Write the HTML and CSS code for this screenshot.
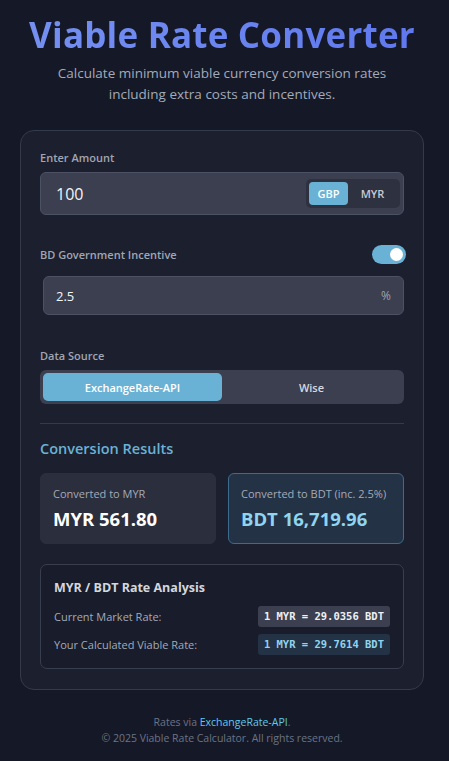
FILE: index.html
```html
<!DOCTYPE html>
<html lang="en">
<head>
<meta charset="utf-8">
<title>Viable Rate Converter</title>
<link rel="stylesheet" href="styles.css">
</head>
<body>
<div class="page">
  <header class="header">
    <h1 class="title">Viable Rate Converter</h1>
    <p class="subtitle">Calculate minimum viable currency conversion rates including extra costs and incentives.</p>
  </header>

  <main class="card">
    <section class="field">
      <label class="label">Enter Amount</label>
      <div class="amount-input">
        <span class="amount-value">100</span>
        <div class="currency-toggle">
          <span class="cur cur-active">GBP</span>
          <span class="cur">MYR</span>
        </div>
      </div>
    </section>

    <section class="field field-incentive">
      <div class="label-row">
        <label class="label">BD Government Incentive</label>
        <span class="switch"><span class="knob"></span></span>
      </div>
      <div class="pct-input">
        <span class="pct-value">2.5</span>
        <span class="pct-sign">%</span>
      </div>
    </section>

    <section class="field field-source">
      <label class="label">Data Source</label>
      <div class="segmented">
        <span class="seg seg-active">ExchangeRate-API</span>
        <span class="seg">Wise</span>
      </div>
    </section>

    <hr class="divider">

    <h2 class="results-title">Conversion Results</h2>
    <div class="results">
      <div class="result">
        <div class="result-label">Converted to MYR</div>
        <div class="result-value">MYR 561.80</div>
      </div>
      <div class="result result-hi">
        <div class="result-label">Converted to BDT (inc. 2.5%)</div>
        <div class="result-value">BDT 16,719.96</div>
      </div>
    </div>

    <div class="analysis">
      <h3 class="analysis-title">MYR / BDT Rate Analysis</h3>
      <div class="row">
        <span class="row-label">Current Market Rate:</span>
        <span class="badge">1 MYR = 29.0356 BDT</span>
      </div>
      <div class="row">
        <span class="row-label">Your Calculated Viable Rate:</span>
        <span class="badge badge-hi">1 MYR = 29.7614 BDT</span>
      </div>
    </div>
  </main>

  <footer class="footer">
    <p>Rates via <span class="link">ExchangeRate-API</span>.</p>
    <p>© 2025 Viable Rate Calculator. All rights reserved.</p>
  </footer>
</div>
</body>
</html>
```

FILE: styles.css
```css
* { box-sizing: border-box; }
html, body { margin: 0; padding: 0; }
body {
  background: #151927;
  font-family: "Open Sans", "Noto Sans", sans-serif;
  color: #e5e7eb;
  width: 449px;
  height: 761px;
  overflow: hidden;
}
.page {
  width: 444px;
  padding: 12px 20px 0;
  display: flex;
  flex-direction: column;
}
.header { text-align: center; }
.title {
  margin: 0;
  font-size: 35px;
  line-height: 46px;
  font-weight: 700;
  color: #6a84f0;
  background: linear-gradient(90deg, #7590f2, #5f78ee);
  -webkit-background-clip: text;
  background-clip: text;
  -webkit-text-fill-color: transparent;
  letter-spacing: 0.2px;
}
.subtitle {
  margin: 5px auto 0;
  width: 360px;
  font-size: 13.5px;
  line-height: 21px;
  color: #a3aab9;
}
.card {
  margin-top: 25px;
  background: #1c1f2d;
  border: 1px solid #353a4b;
  border-radius: 14px;
  padding: 19px 19px 20px;
  display: flex;
  flex-direction: column;
}
.label {
  display: block;
  font-size: 11px;
  font-weight: 600;
  color: #a0a6b4;
  line-height: 16px;
}
.field .label { margin-bottom: 6px; }
.amount-input {
  height: 43px;
  background: #3b3f50;
  border: 1px solid #4c5163;
  border-radius: 6px;
  display: flex;
  align-items: center;
  justify-content: space-between;
  padding: 0 3px 0 15px;
}
.amount-value { font-size: 16px; color: #f3f4f6; }
.currency-toggle {
  display: flex;
  background: #2d3140;
  border-radius: 5px;
  padding: 3px;
  height: 29px;
}
.cur {
  font-size: 11px;
  font-weight: 600;
  color: #c6cad3;
  display: flex;
  align-items: center;
  justify-content: center;
  border-radius: 4px;
}
.cur-active { background: #6ab2d5; color: #ffffff; width: 39px; }
.cur + .cur { width: 49px; }

.field-incentive { margin-top: 30px; }
.label-row {
  display: flex;
  justify-content: space-between;
  align-items: center;
  margin-bottom: 12px;
}
.field-incentive .label { margin-bottom: 0; }
.switch {
  width: 34px;
  height: 19px;
  border-radius: 10px;
  background: #6ab2d5;
  position: relative;
  margin-right: -2px;
}
.knob {
  position: absolute;
  right: 3px;
  top: 3px;
  width: 13px;
  height: 13px;
  border-radius: 50%;
  background: #ffffff;
}
.pct-input {
  margin-left: 3px;
  height: 39px;
  background: #3b3f50;
  border: 1px solid #4c5163;
  border-radius: 6px;
  display: flex;
  align-items: center;
  justify-content: space-between;
  padding: 0 12px 0 12px;
}
.pct-value { font-size: 13px; color: #f3f4f6; }
.pct-sign { font-size: 12px; color: #9ca3af; }

.field-source { margin-top: 33px; }
.segmented {
  height: 34px;
  background: #3b3f50;
  border-radius: 6px;
  padding: 3px;
  display: flex;
}
.seg {
  flex: 1;
  display: flex;
  align-items: center;
  justify-content: center;
  font-size: 11px;
  font-weight: 600;
  color: #d6d9e0;
  border-radius: 5px;
}
.seg-active { background: #6ab2d5; color: #ffffff; }

.divider {
  border: 0;
  border-top: 1px solid #353a4b;
  margin: 19px 0 0;
  height: 0;
}
.results-title {
  margin: 14px 0 0;
  font-size: 14.5px;
  font-weight: 600;
  color: #6ab2d5;
  line-height: 22px;
}
.results {
  margin-top: 13px;
  display: grid;
  grid-template-columns: 1fr 1fr;
  gap: 12px;
}
.result {
  height: 71px;
  background: #2b2e3d;
  border-radius: 6px;
  padding: 12px 12px;
  border: 1px solid #2b2e3d;
}
.result-hi {
  background: #243245;
  border-color: #3e6b8c;
}
.result-label {
  font-size: 11px;
  color: #a3aab9;
  line-height: 16px;
}
.result-value {
  margin-top: 5px;
  font-size: 18.5px;
  font-weight: 700;
  color: #ffffff;
  line-height: 24px;
}
.result-hi .result-value { color: #8fd5f0; }

.analysis {
  margin-top: 20px;
  border: 1px solid #393e4f;
  border-radius: 7px;
  background: #191c2a;
  padding: 13px 13px 13px 13px;
}
.analysis-title {
  margin: 0 0 8px;
  font-size: 12.5px;
  font-weight: 700;
  color: #d4d7de;
  line-height: 20px;
}
.row {
  display: flex;
  justify-content: space-between;
  align-items: center;
  margin-top: 7px;
}
.row-label { font-size: 11px; color: #a3aab9; }
.badge {
  font-family: "DejaVu Sans Mono", "Liberation Mono", monospace;
  font-size: 10.5px;
  font-weight: 700;
  color: #eef0f4;
  background: #3b3f50;
  border-radius: 3px;
  padding: 4px 6px;
  line-height: 13px;
}
.badge-hi { background: #243245; color: #8fd5f0; }

.footer {
  margin-top: 24px;
  text-align: center;
  font-size: 10.5px;
  line-height: 16px;
  color: #6b7385;
}
.footer p { margin: 0; }
.link { color: #5ec8f0; }
```
